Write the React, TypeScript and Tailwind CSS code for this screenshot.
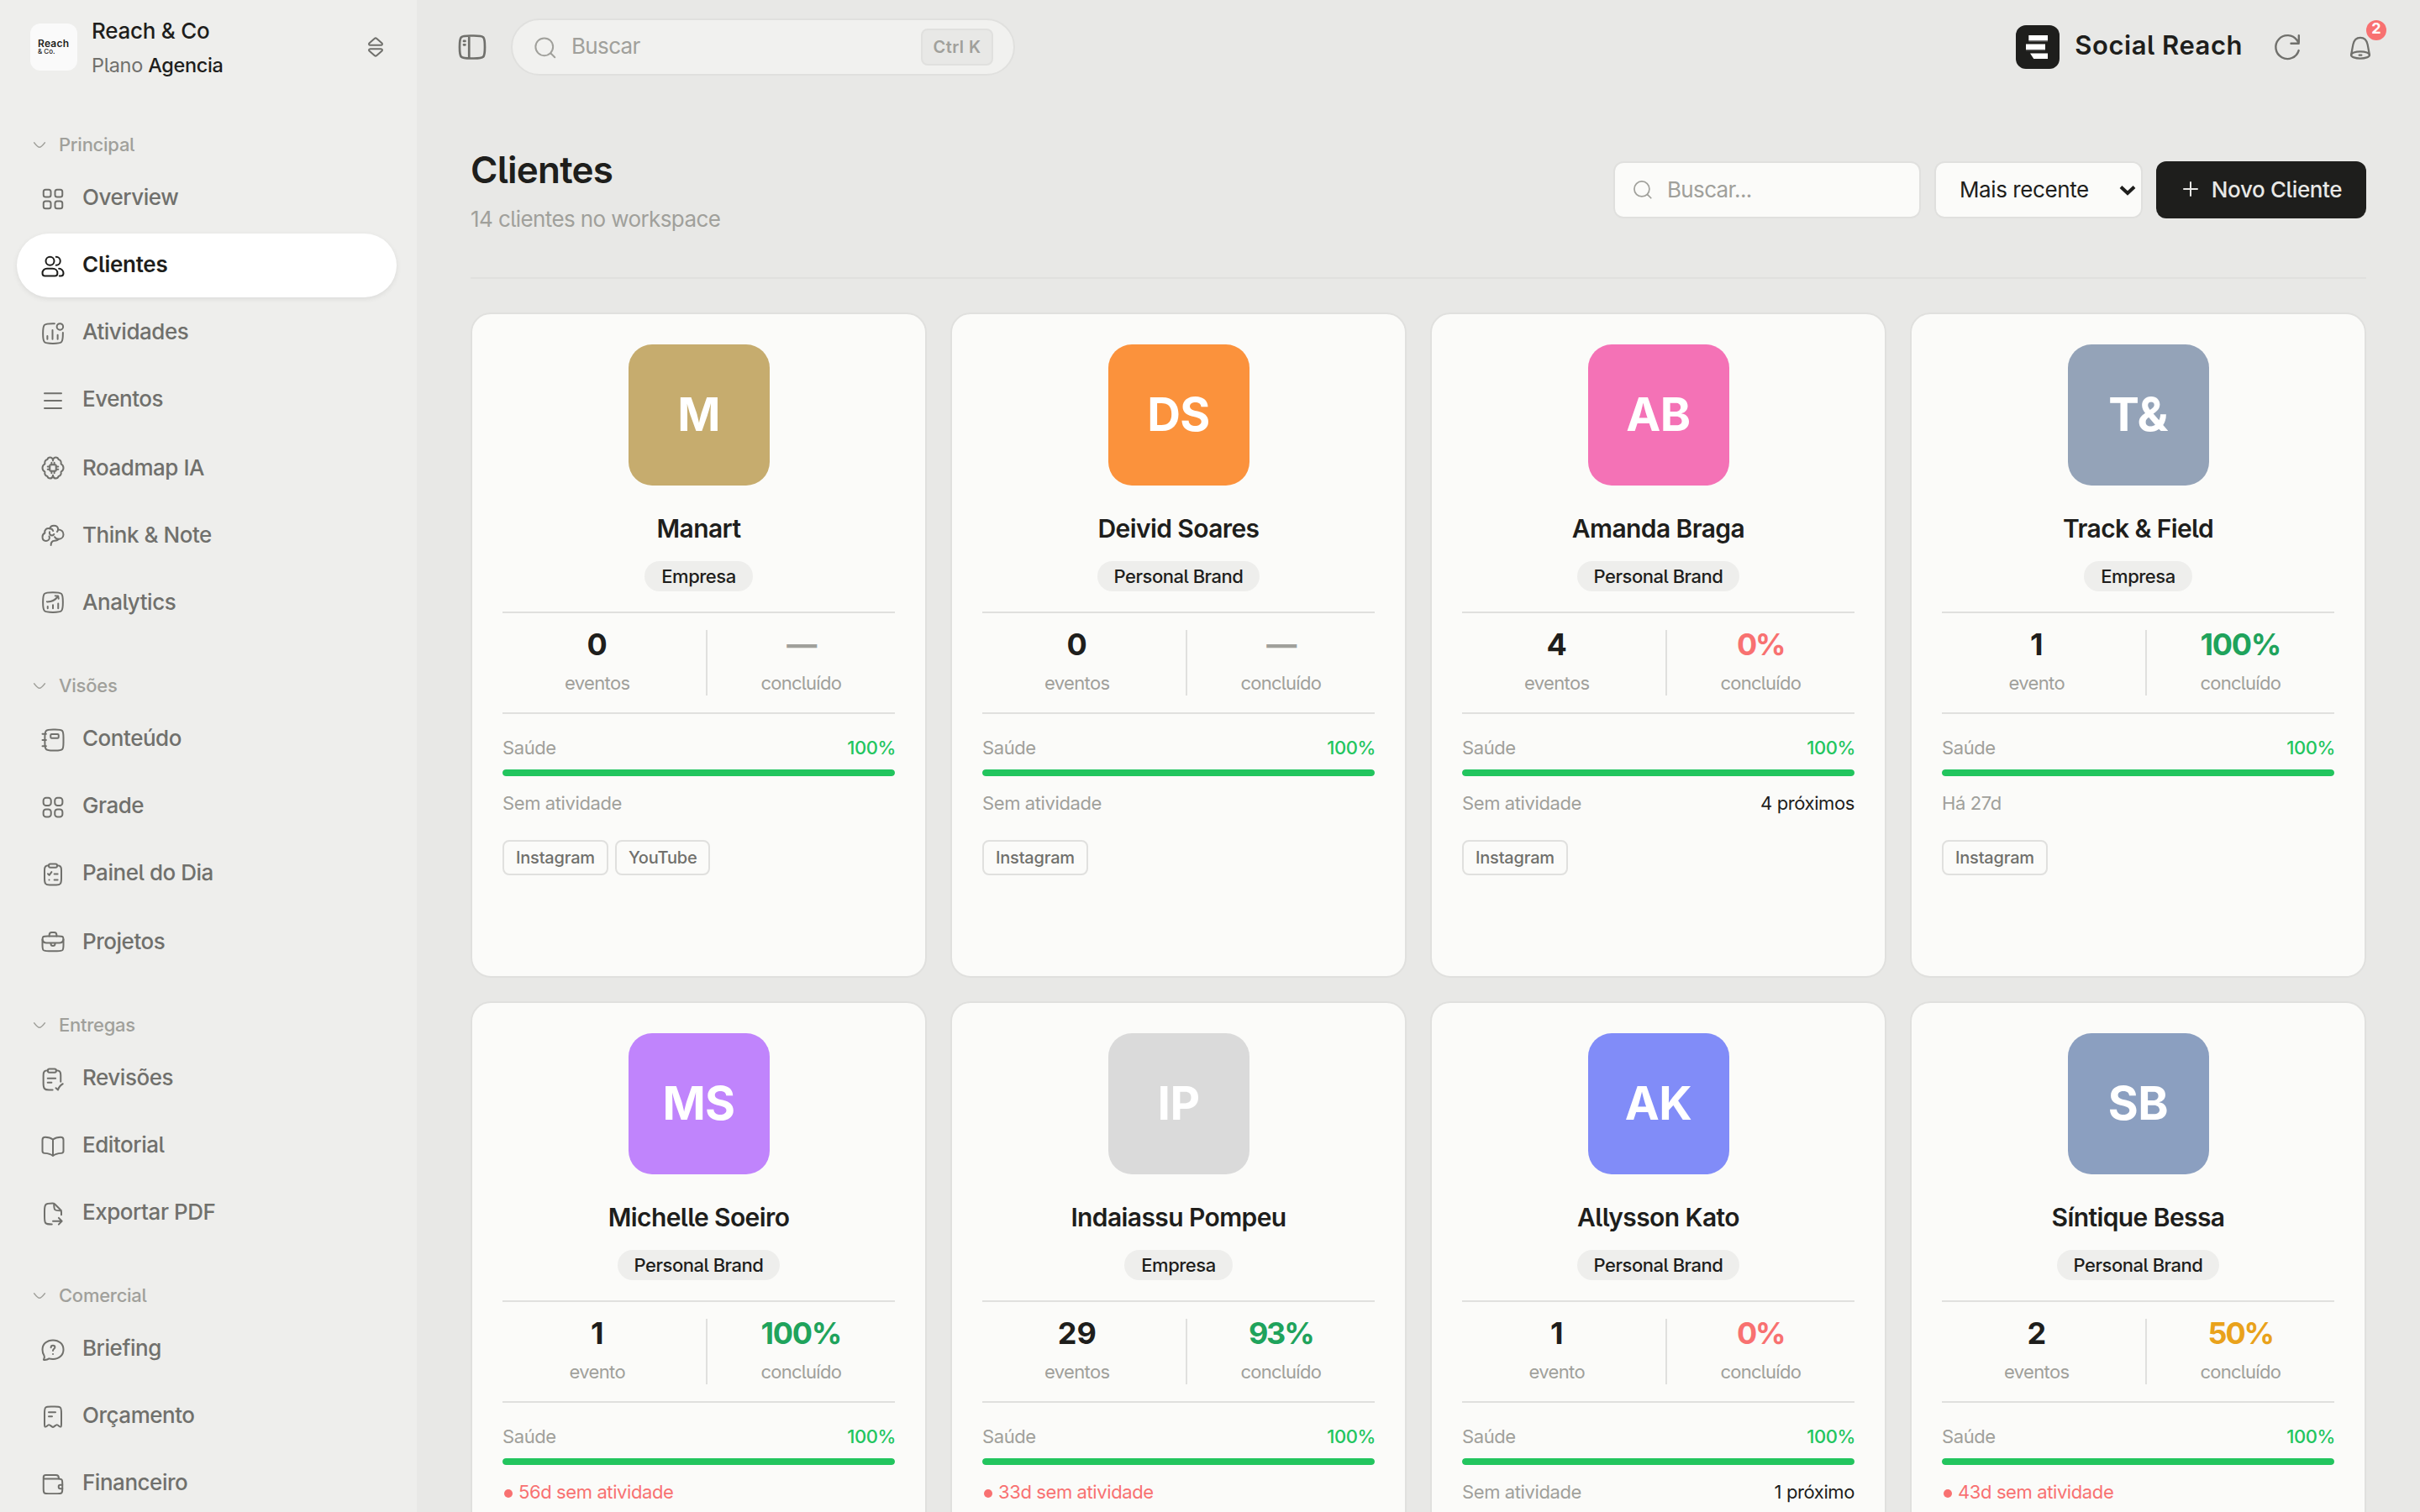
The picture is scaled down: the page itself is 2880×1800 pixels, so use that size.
import { FC, ReactNode } from 'react';
import clsx from 'clsx';

interface IconProps {
  children: ReactNode;
  className?: string;
  strokeWidth?: number;
}

const Icon: FC<IconProps> = ({ children, className, strokeWidth = 1.5 }) => (
  <svg
    viewBox="0 0 24 24"
    fill="none"
    stroke="currentColor"
    strokeWidth={strokeWidth}
    strokeLinecap="round"
    strokeLinejoin="round"
    className={clsx('shrink-0', className)}
  >
    {children}
  </svg>
);

const icons = {
  overview: (
    <>
      <rect x="3" y="3" width="7" height="7" rx="2" />
      <rect x="14" y="3" width="7" height="7" rx="2" />
      <rect x="3" y="14" width="7" height="7" rx="2" />
      <rect x="14" y="14" width="7" height="7" rx="2" />
    </>
  ),
  clients: (
    <>
      <circle cx="9.2" cy="7" r="4" />
      <path d="M15 3a4 4 0 0 1 0 8" />
      <path d="M6.3 14.2h5.4c2.6 0 4.6 1.8 4.6 4.3 0 1.8-.8 2.7-2.4 2.7H4.3C2.8 21.2 2 20.3 2 18.5c0-2.5 1.8-4.3 4.3-4.3Z" />
      <path d="M17.7 14.2c2.4 0 4.3 2 4.3 4.4 0 1.7-.8 2.6-2.4 2.6h-1.4" />
    </>
  ),
  activity: (
    <>
      <circle cx="18.7" cy="5.5" r="3" />
      <path d="M13.5 2.5H12c-4.5 0-6.7 0-8.1 1.4-1.4 1.4-1.4 3.6-1.4 8.1s0 6.7 1.4 8.1c1.4 1.4 3.6 1.4 8.1 1.4s6.7 0 8.1-1.4c1.4-1.4 1.4-3.6 1.4-8.1v-.8" />
      <path d="M6.7 14.3v3M11.6 8.8v8.5M16.5 13.3v4" />
    </>
  ),
  events: <path d="M4 4.9h16M4 12h16M4 19.2h16" />,
  roadmap: (
    <>
      <path d="M12 4.3C11.6 2.9 10.5 2 9.3 2 8 2 7 2.9 6.7 4 4.8 4.3 3.9 5.9 4.3 8.3 2.8 9 2 10.3 2 12s.8 3 2.3 3.7c-.4 2.4.5 4 2.4 4.3.3 1.1 1.3 2 2.6 2 1.2 0 2.3-.9 2.7-2.3.4 1.4 1.5 2.3 2.7 2.3 1.3 0 2.3-.9 2.6-2 1.9-.3 2.8-1.9 2.4-4.3 1.5-.7 2.3-2 2.3-3.7s-.8-3-2.3-3.7c.4-2.4-.5-4-2.4-4.3C17 2.9 16 2 14.7 2c-1.2 0-2.3.9-2.7 2.3Z" />
      <path d="M12 4.3v.8M12 18.9v.8" />
      <rect x="9" y="9" width="6" height="6" rx=".8" />
      <path d="M10.7 7v2M13.3 7v2M10.7 15v2M13.3 15v2M7 10.7h2M7 13.3h2M15 10.7h2M15 13.3h2" />
    </>
  ),
  think: (
    <>
      <path d="M9 5.8C9.4 4 11 2.9 12.9 2.9c2.3 0 4 1.5 4 3.5 0 1-.3 1.8-.9 2.4" />
      <path d="M16.9 6.7c3 0 5.1 1.9 5.1 4.6 0 2.6-2 4.5-4.6 4.5-1.7 0-3-.7-3.7-2" />
      <path d="M9 5.8C6.2 4.9 3.7 7 4.3 10 2.8 10.8 2 12 2 13.8c0 2.2 1.4 3.7 3.4 3.7 1.9 0 3.3-1.3 3.3-3 0-.5-.1-.9-.3-1.3" />
      <path d="M9 5.8c1.500 0 2.700.9 3.100 2.200M8.800 9c-.5 1.900.6 3.300 2.300 3.300.9 0 1.600-.4 1.900-1.100" />
      <path d="M17.400 15.800c-.8 1.300-2.300 1.500-3.900 1.600-2.200.2-3.400 1.700-3.400 4.100" />
    </>
  ),
  analytics: (
    <>
      <path d="M2.500 12c0-4.500 0-6.700 1.400-8.100C5.300 2.500 7.500 2.500 12 2.500s6.700 0 8.100 1.400c1.400 1.400 1.400 3.600 1.400 8.100s0 6.700-1.400 8.100c-1.400 1.400-3.600 1.400-8.100 1.400s-6.700 0-8.100-1.400C2.500 18.700 2.500 16.500 2.500 12Z" />
      <path d="M7 15.900v1.900M12 14.500v3.300M17 13.200v4.600M6.300 11.500c4.400.1 8-1.500 10.400-5.200M14.200 5.900l2.700.1.500 2.600" />
    </>
  ),
  content: (
    <>
      <path d="M4.300 10c0-3.800 0-5.700 1.200-6.800C6.700 2 8.500 2 12.200 2h2c3.700 0 5.500 0 6.700 1.200C22 4.300 22 6.200 22 10v4c0 3.800 0 5.700-1.100 6.800C19.700 22 17.900 22 14.200 22h-2c-3.700 0-5.500 0-6.700-1.200-1.200-1.100-1.200-3-1.200-6.800Z" />
      <rect x="9.8" y="6.3" width="7.6" height="3.8" rx="1" />
      <path d="M2 6.200h3.500M2 12h3.500M2 17.800h3.500" />
    </>
  ),
  grid: (
    <>
      <rect x="2.9" y="3" width="7.3" height="7.3" rx="2.6" />
      <rect x="13.8" y="3" width="7.3" height="7.3" rx="2.6" />
      <rect x="2.9" y="13.9" width="7.3" height="7.3" rx="2.6" />
      <rect x="13.8" y="13.9" width="7.3" height="7.3" rx="2.6" />
    </>
  ),
  day: (
    <>
      <rect x="8" y="2" width="8" height="3.3" rx="1.5" />
      <path d="M16 3.400c3 .1 4 1 4 4.600v8c0 4.800-.8 6-4.800 6H8.800C4.800 22 4 20.800 4 16V8c0-3.600 1-4.500 4-4.600" />
      <path d="M7.200 11.400l1.300 1.300 2.200-3M13.300 11.500h3.200M13.300 17.200h3.200M8.400 17.200h.01" />
    </>
  ),
  projects: (
    <>
      <path d="M2 11.500c0-2.400 0-3.600.8-4.200.7-.6 1.800-.6 4.200-.6h10c2.400 0 3.500 0 4.200.6.8.6.8 1.800.8 4.200V15c0 2.800 0 4.200-.9 5.100-.9.800-2.300.8-5.100.8H8c-2.800 0-4.200 0-5.100-.8C2 19.200 2 17.800 2 15Z" />
      <path d="M8.500 6.700v-.9c0-1.600.7-2.700 2.300-2.700h2.400c1.600 0 2.300 1.100 2.300 2.700v.9" />
      <path d="M2 10c.3 2.300 1.700 3.200 4 3.200h12c2.300 0 3.700-.9 4-3.200M10 13.200v.8a2 2 0 0 0 4 0v-.8" />
    </>
  ),
  reviews: (
    <>
      <rect x="7.1" y="2" width="8" height="3.3" rx="1.5" />
      <path d="M15.100 3.400c3.200.1 4.300 1 4.300 4.600v6.200M7.100 3.400C4 3.500 2.900 4.400 2.900 8v8c0 4.800 1 6 5.200 6h3.600" />
      <path d="M7 11h7.500M7 15h3.700M14.800 20.200l2 1.800c.9-2.900 2.300-4.600 4.600-5.800" />
    </>
  ),
  editorial: (
    <path d="M12 5.200v15.600M12 5.200C10 3.600 7.700 3 4.700 3 2.800 3 2 3.800 2 5.500v10.700c0 1.500.6 2 2.100 2.100 3.300.2 5.900.8 7.900 2.500 2-1.700 4.600-2.300 7.900-2.500 1.500-.1 2.100-.6 2.100-2.100V5.500C22 3.800 21.200 3 19.300 3c-3 0-5.300.6-7.300 2.200Z" />
  ),
  exportPdf: (
    <>
      <path d="M20 13v-2.400c0-.8 0-1.200-.2-1.600-.1-.4-.4-.7-1-1.200L14 3c-.5-.5-.8-.8-1.100-.9-.4-.1-.7-.1-1.400-.1C8.100 2 6.300 2 5.200 3.200 4 4.400 4 6.200 4 9.600V14c0 3.800 0 5.700 1 6.800.9 1.100 2.500 1.200 6 1.200" />
      <path d="M13 2.500V3c0 2.800 0 4.200.9 5.100S16.200 9 19 9h.6M12 19h8.300M17.500 15.900l3 3.100-3 3.100" />
    </>
  ),
  briefing: (
    <>
      <path d="M12 2.700c5.800 0 10 3.800 10 9s-4.200 9-10 9c-1.400 0-2.500-.1-3.700-.4-1.400 1-3 1.300-4.700 1.200-.5 0-.6-.3-.3-.7.7-1.200.9-2.200.3-3.400C2.500 15.700 2 13.900 2 11.700c0-5.200 4.200-9 10-9Z" />
      <path d="M10.100 9.700c0-1.100.8-1.900 1.900-1.900s1.900.8 1.900 1.800c0 1.500-1.900 1.500-1.900 3.200M12 15.900h.01" />
    </>
  ),
  budget: (
    <>
      <path d="M4 18.600V8.400C4 5.400 4 3.900 5 2.900 5.900 2 7.400 2 10.400 2h3.200c3 0 4.500 0 5.400.9 1 1 1 2.500 1 5.500v10.200c0 1.600 0 2.400-.5 2.600-.8.500-2-1-2.700-1.400-.5-.3-.7-.5-1-.5s-.5.200-1.200.6l-1.400 1c-.6.500-.9.700-1.200.7s-.6-.2-1.200-.7l-1.400-1c-.7-.4-.9-.6-1.200-.6s-.5.200-1 .5c-.7.400-1.900 1.900-2.700 1.400-.5-.2-.5-1-.5-2.600Z" />
      <path d="M8 7.300h6.400M8 11.300h3.200" />
    </>
  ),
  finance: (
    <>
      <path d="M3 5.200v11.200c0 2.200 0 3.200.8 3.900.7.600 1.700.6 3.900.6h8.600c2.200 0 3.200 0 3.900-.6.800-.7.800-1.700.8-3.900v-5.200c0-2.100 0-3.100-.8-3.800-.7-.7-1.700-.7-3.900-.7H4.500C3.600 6.700 3 6 3 5.200Zm0 0c0-1.200.9-2.100 2.100-2.100h9.700c1.700 0 2.700.9 2.700 2.600v1" />
      <path d="M21 12.500h-2c-1 0-1.600.6-1.600 1.500v.6c0 .9.600 1.500 1.600 1.500h2" />
    </>
  ),
};

type IconName = keyof typeof icons;

interface NavItem {
  label: string;
  icon: IconName;
  active?: boolean;
  low?: boolean;
}

const sections: { title: string; className?: string; items: NavItem[] }[] = [
  {
    title: 'Principal',
    items: [
      { label: 'Overview', icon: 'overview' },
      { label: 'Clientes', icon: 'clients', active: true },
      { label: 'Atividades', icon: 'activity' },
      { label: 'Eventos', icon: 'events' },
      { label: 'Roadmap IA', icon: 'roadmap', low: true },
      { label: 'Think & Note', icon: 'think', low: true },
      { label: 'Analytics', icon: 'analytics', low: true },
    ],
  },
  {
    title: 'Visões',
    items: [
      { label: 'Conteúdo', icon: 'content' },
      { label: 'Grade', icon: 'grid' },
      { label: 'Painel do Dia', icon: 'day' },
      { label: 'Projetos', icon: 'projects', low: true },
    ],
  },
  {
    title: 'Entregas',
    items: [
      { label: 'Revisões', icon: 'reviews' },
      { label: 'Editorial', icon: 'editorial' },
      { label: 'Exportar PDF', icon: 'exportPdf' },
    ],
  },
  {
    title: 'Comercial',
    className: '-mt-0.5',
    items: [
      { label: 'Briefing', icon: 'briefing' },
      { label: 'Orçamento', icon: 'budget' },
      { label: 'Financeiro', icon: 'finance' },
    ],
  },
];

interface Client {
  initials: string;
  name: string;
  type: string;
  color: string;
  events: number;
  done?: number;
  health: number;
  activity: string;
  late?: boolean;
  next?: string;
  channels?: string[];
}

const clients: Client[] = [
  { initials: 'M', name: 'Manart', type: 'Empresa', color: 'bg-[#c6ac6e]', events: 0, health: 100, activity: 'Sem atividade', channels: ['Instagram', 'YouTube'] },
  { initials: 'DS', name: 'Deivid Soares', type: 'Personal Brand', color: 'bg-[#fb923c]', events: 0, health: 100, activity: 'Sem atividade', channels: ['Instagram'] },
  { initials: 'AB', name: 'Amanda Braga', type: 'Personal Brand', color: 'bg-[#f472b6]', events: 4, done: 0, health: 100, activity: 'Sem atividade', next: '4 próximos', channels: ['Instagram'] },
  { initials: 'T&', name: 'Track & Field', type: 'Empresa', color: 'bg-[#94a3b8]', events: 1, done: 100, health: 100, activity: 'Há 27d', channels: ['Instagram'] },
  { initials: 'MS', name: 'Michelle Soeiro', type: 'Personal Brand', color: 'bg-[#c084fc]', events: 1, done: 100, health: 100, activity: '56d sem atividade', late: true },
  { initials: 'IP', name: 'Indaiassu Pompeu', type: 'Empresa', color: 'bg-[#dadada]', events: 29, done: 93, health: 100, activity: '33d sem atividade', late: true },
  { initials: 'AK', name: 'Allysson Kato', type: 'Personal Brand', color: 'bg-[#818cf8]', events: 1, done: 0, health: 100, activity: 'Sem atividade', next: '1 próximo' },
  { initials: 'SB', name: 'Síntique Bessa', type: 'Personal Brand', color: 'bg-[#8b9fc0]', events: 2, done: 50, health: 100, activity: '43d sem atividade', late: true },
];

const doneColor = (done?: number) => {
  if (done === undefined) return 'text-[#a0a09b]';
  if (done >= 80) return 'text-[#1fa35c]';
  if (done >= 40) return 'text-[#e9a21b]';
  return 'text-[#f87171]';
};

const Sidebar: FC = () => (
  <aside className="flex w-[496px] shrink-0 flex-col bg-[#eeeeec]">
    <div className="flex h-28 shrink-0 items-center px-9">
      <div className="flex size-14 shrink-0 flex-col justify-center rounded-xl bg-[#fafafa] pl-[9px] text-[#1e1e1c]">
        <span className="text-[12px] leading-[11px] font-semibold tracking-[0.02em]">Reach</span>
        <span className="text-[8px] leading-[9px] font-medium">&amp; Co.</span>
      </div>
      <div className="ml-[17px] flex-1 pt-0.5 leading-[41px]">
        <p className="text-[26px] font-medium tracking-[-0.01em] text-[#1e1e1c]">Reach &amp; Co</p>
        <p className="text-[23.5px] tracking-[-0.015em] text-[#70706c]">
          Plano <span className="font-medium text-[#1e1e1c]">Agencia</span>
        </p>
      </div>
      <Icon className="size-[26px] text-[#70706c]" strokeWidth={1.9}>
        <path d="M11 2.600Q12 1.700 13 2.600L18.800 7.600C19.800 8.600 19.400 10 17.800 10H6.200C4.600 10 4.200 8.600 5.200 7.600ZM13 21.400Q12 22.300 11 21.400L5.200 16.400C4.200 15.400 4.600 14 6.200 14H17.800C19.400 14 19.800 15.400 18.800 16.400Z" />
      </Icon>
    </div>

    <nav className="mt-[34px] flex flex-col gap-9 pr-6 pl-5">
      {sections.map((section) => (
        <div key={section.title} className={section.className}>
          <div className="flex h-[52px] items-center gap-3 pl-4 text-[22px] font-medium tracking-[-0.012em] text-[#a0a09b]">
            <Icon className="mt-0.5 size-[22px]">
              <path d="M5 8.500c3.500 4.500 5 6 7 6s3.500-1.500 7-6" />
            </Icon>
            {section.title}
          </div>
          <ul className="flex flex-col gap-1">
            {section.items.map((item) => (
              <li
                key={item.label}
                className={clsx(
                  'flex h-[76px] items-center gap-5 rounded-full pl-7 text-[26px]',
                  item.active
                    ? 'bg-white font-semibold tracking-[-0.01em] text-[#1e1e1c] shadow-[0_2px_6px_rgba(0,0,0,0.08)]'
                    : 'font-medium tracking-[-0.018em] text-[#70706c]',
                )}
              >
                <Icon className="mt-0.5 size-[30px]" strokeWidth={1.6}>
                  {icons[item.icon]}
                </Icon>
                <span className={item.low ? 'pt-px' : 'pb-[3px]'}>{item.label}</span>
              </li>
            ))}
          </ul>
        </div>
      ))}
    </nav>
  </aside>
);

const SearchIcon: FC<{ className?: string }> = ({ className }) => (
  <Icon className={className} strokeWidth={1.6}>
    <circle cx="11" cy="11" r="8.3" />
    <path d="M17.200 17.200 21 21" />
  </Icon>
);

const TopBar: FC = () => (
  <header className="flex h-28 shrink-0 items-center pr-[55px] pl-12">
    <Icon className="size-9 text-[#70706c]" strokeWidth={1.8}>
      <path d="M2 12c0-4.200 0-6.400 1.200-7.700C4.500 3 6.600 3 10.800 3h2.400c4.200 0 6.300 0 7.600 1.300C22 5.600 22 7.800 22 12s0 6.400-1.200 7.700C19.500 21 17.400 21 13.200 21h-2.400c-4.200 0-6.300 0-7.600-1.300C2 18.400 2 16.200 2 12ZM9.500 3.200v17.600M5.300 7.300h1M5.300 10.200h1" />
    </Icon>
    <div className="ml-7 flex h-[68px] w-[600px] items-center rounded-full border-2 border-[#e0e0de] bg-[#f1f1ef] px-6 text-[#a0a09b]">
      <SearchIcon className="mt-0.5 size-[30px]" />
      <span className="ml-4 flex-1 pb-[3px] text-[26px] tracking-[-0.025em]">Buscar</span>
      <kbd className="flex h-11 w-[86px] items-center justify-center rounded-lg border-2 border-[#e0e0de] bg-[#e8e8e6] pb-px font-['Inter',sans-serif] text-[20px] font-semibold tracking-[0.02em]">
        Ctrl K
      </kbd>
    </div>

    <div className="ml-auto flex items-center">
      <svg viewBox="0 0 52 52" className="size-[52px]">
        <rect width="52" height="52" rx="12" fill="#1e1e1c" />
        <path d="M15.300 12H38v6.300H15.300ZM12 22.600h23V29H12ZM17 33.400h21V40H21.300Z" fill="#fff" />
        <path d="M15.300 18.300H38v1.500H15.300ZM12 29h23v1.500H12Z" fill="#fff" opacity=".25" />
      </svg>
      <span className="ml-[18px] pb-[3px] text-[31px] font-semibold tracking-[0.017em] text-[#1e1e1c]">Social Reach</span>
      <Icon className="ml-[35px] size-9 text-[#70706c]" strokeWidth={1.6}>
        <path d="M21.100 14.700A9.300 9.300 0 1 1 19.800 6.700C20.400 7.500 20.800 8.300 21.100 9.200M21.200 2.800v5.400c0 .7-.3 1-1 1h-5.200" />
      </Icon>
      <div className="relative ml-[53px]">
        <Icon className="mt-0.5 size-8 text-[#70706c]" strokeWidth={1.7}>
          <path d="M3.800 18.300 5.500 9.100C6.300 5 8.700 2.900 12 2.900s5.700 2.100 6.500 6.200l1.700 9.200" />
          <ellipse cx="12" cy="18.3" rx="8.2" ry="3.1" />
          <path d="M11 18.500h2" />
        </Icon>
        <span className="absolute -top-[15px] left-[23px] flex size-6 items-center justify-center rounded-full bg-[#f87171] pb-[5px] text-[18px] leading-none font-bold text-white">
          2
        </span>
      </div>
    </div>
  </header>
);

const ClientCard: FC<{ client: Client }> = ({ client }) => (
  <article className="flex h-[792px] flex-col rounded-3xl border-2 border-[#e0e0de] bg-[#fbfbf9] p-9">
    <div className="flex flex-col items-center">
      <div
        className={clsx(
          'flex size-[168px] items-center justify-center rounded-[28px] pb-px text-[55px] font-bold tracking-[-0.01em] text-white',
          client.color,
        )}
      >
        {client.initials}
      </div>
      <h2 className="mt-[31px] text-[30px] leading-10 font-semibold tracking-[-0.02em] text-[#1e1e1c]">{client.name}</h2>
      <span className="mt-[19px] flex h-9 items-center rounded-full bg-[#eeeeec] px-5 pt-px text-[22px] font-medium tracking-[-0.022em] text-[#1e1e1c]">
        {client.type}
      </span>
    </div>

    <div className="mt-6 grid grid-cols-2 gap-4 border-y-2 border-[#e0e0de] py-5 text-center">
      <div className="h-[78px]">
        <p className="text-[36px] leading-[35px] font-bold text-[#1e1e1c]">{client.events}</p>
        <p className="mt-3.5 text-[22px] leading-7 tracking-[-0.028em] text-[#a0a09b]">
          {client.events === 1 ? 'evento' : 'eventos'}
        </p>
      </div>
      <div className="h-[78px] border-l-2 border-[#e0e0de]">
        <p
          className={clsx(
            'text-[36px] leading-[35px] font-bold',
            client.done === 100 ? 'tracking-[-0.035em]' : 'tracking-[-0.06em]',
            doneColor(client.done),
          )}
        >
          {client.done === undefined ? '—' : `${client.done}%`}
        </p>
        <p className="mt-3.5 text-[22px] leading-7 tracking-[-0.034em] text-[#a0a09b]">concluído</p>
      </div>
    </div>

    <div className="mt-6 text-[22px] leading-8 tracking-[-0.018em] text-[#a0a09b]">
      <div className="flex justify-between">
        <span>Saúde</span>
        <span className="-mr-px font-medium text-[#22c55e]">{client.health}%</span>
      </div>
      <div className="mt-2.5 h-2 overflow-hidden rounded bg-[#e0e0de]">
        <div className="h-full rounded bg-[#22c55e]" style={{ width: `${client.health}%` }} />
      </div>
      <div className="mt-4 flex justify-between">
        {client.late ? (
          <span className="flex items-center text-[#f87171]">
            <i className="mt-[3px] mr-[7px] ml-0.5 size-2.5 rounded-full bg-[#f87171]" />
            {client.activity}
          </span>
        ) : (
          <span>{client.activity}</span>
        )}
        {client.next && <span className="text-[#1e1e1c]">{client.next}</span>}
      </div>
    </div>

    {client.channels && (
      <div className="mt-7 flex gap-2">
        {client.channels.map((channel) => (
          <span
            key={channel}
            className="flex h-[42px] items-center rounded-lg border-2 border-[#e0e0de] px-3.5 text-[20px] font-medium tracking-[-0.01em] text-[#70706c]"
          >
            {channel}
          </span>
        ))}
      </div>
    )}
  </article>
);

export default function App() {
  return (
    <div className="flex h-screen overflow-hidden bg-[#e8e8e6] font-['Inter',sans-serif] [font-feature-settings:'cv05']">
      <Sidebar />
      <div className="flex min-w-0 flex-1 flex-col">
        <TopBar />
        <main className="px-16">
          <div className="flex items-center justify-between border-b-2 border-[#e0e0de] pt-[62px] pb-[50px]">
            <div>
              <h1 className="text-[44px] leading-[56px] font-semibold tracking-[-0.017em] text-[#1e1e1c]">Clientes</h1>
              <p className="mt-2.5 pt-px text-[26px] leading-[39px] tracking-[-0.023em] text-[#a0a09b]">14 clientes no workspace</p>
            </div>
            <div className="mb-0.5 flex gap-4">
              <label className="flex h-[68px] w-[366px] items-center gap-4 rounded-xl border-2 border-[#e0e0de] bg-[#fbfbf9] pl-5 text-[#a0a09b]">
                <SearchIcon className="size-[26px]" />
                <input
                  placeholder="Buscar..."
                  className="w-full pb-0.5 text-[26px] tracking-[-0.025em] outline-none placeholder:text-[#a0a09b]"
                />
              </label>
              <div className="relative">
                <select className="h-[68px] w-[248px] appearance-none rounded-xl border-2 border-[#e0e0de] bg-[#fbfbf9] pb-0.5 pl-7 text-[26px] tracking-[-0.016em] text-[#1e1e1c]">
                  <option>Mais recente</option>
                </select>
                <svg viewBox="0 0 20 14" fill="none" className="absolute top-[28px] right-[8px] h-3.5 w-5">
                  <path d="M2 2.500 10 10l8-7.500" stroke="#1e1e1c" strokeWidth="4" />
                </svg>
              </div>
              <button className="flex h-[68px] w-[250px] items-center justify-center gap-[13px] rounded-xl bg-[#1e1e1c] pb-0.5 text-[26px] font-medium tracking-[-0.014em] text-[#e8e8e6]">
                <Icon className="size-6" strokeWidth={2}>
                  <path d="M12 4v16M4 12h16" />
                </Icon>
                Novo Cliente
              </button>
            </div>
          </div>

          <div className="mt-10 grid grid-cols-4 gap-7">
            {clients.map((client) => (
              <ClientCard key={client.name} client={client} />
            ))}
          </div>
        </main>
      </div>
    </div>
  );
}
